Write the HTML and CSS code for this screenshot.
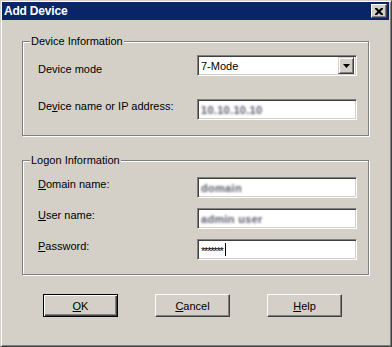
FILE: index.html
```html
<!DOCTYPE html>
<html lang="en">
  <head>
    <meta charset="UTF-8" />
    <title>Add Device</title>
    <link rel="stylesheet" href="styles.css">
  </head>
  <body>
    <div class="window">
      <div class="titlebar">
        <span class="title">Add Device</span>
        <span class="close-btn">
          <svg width="8" height="7" viewBox="0 0 8 7">
            <path d="M0 0h2l2 2 2-2h2v1l-2.5 2.5L8 6v1H6L4 5 2 7H0V6l2.5-2.5L0 1z" fill="#000" />
          </svg>
        </span>
      </div>

      <div class="content">
        <!-- Device Information -->
        <fieldset class="group group-device">
          <legend>Device Information</legend>
          <div class="row">
            <label class="label label-low">Device mode</label>
            <div class="field combo">
              <span class="combo-text">7-Mode</span>
              <span class="combo-btn">
                <svg width="7" height="4" viewBox="0 0 7 4"><path d="M0 0h7L3.5 4z" fill="#000" /></svg>
              </span>
            </div>
          </div>
          <div class="row row-spaced">
            <label class="label">De<u>v</u>ice name or IP address:</label>
            <div class="field"><span class="blurred">10.10.10.10</span></div>
          </div>
        </fieldset>

        <!-- Logon Information -->
        <fieldset class="group group-logon">
          <legend>Logon Information</legend>
          <div class="row">
            <label class="label"><u>D</u>omain name:</label>
            <div class="field"><span class="blurred">domain</span></div>
          </div>
          <div class="row row-tight">
            <label class="label"><u>U</u>ser name:</label>
            <div class="field"><span class="blurred">admin user</span></div>
          </div>
          <div class="row row-tight">
            <label class="label"><u>P</u>assword:</label>
            <div class="field"><span class="password">*******</span><span class="caret"></span></div>
          </div>
        </fieldset>

        <div class="buttons">
          <button class="btn btn-default"><u>O</u>K</button>
          <button class="btn"><u>C</u>ancel</button>
          <button class="btn"><u>H</u>elp</button>
        </div>
      </div>
    </div>
  </body>
</html>
```

FILE: styles.css
```css
/* Global Styles */
body {
  margin: 0;
  font-family: "Liberation Sans", Arial, sans-serif;
  font-size: 11px;
  color: #000;
  background: #d4d0c8;
}

/* Window frame */
.window {
  width: 392px;
  height: 347px;
  box-sizing: border-box;
  background: #d4d0c8;
  border: 1px solid;
  border-color: #d4d0c8 #404040 #404040 #d4d0c8;
  box-shadow: inset 1px 1px #fff, inset -1px -1px #808080;
  padding: 1px 2px 0 1px;
}

.titlebar {
  height: 18px;
  background: #0a246a;
  display: flex;
  align-items: center;
  justify-content: space-between;
  padding: 0 2px 0 2px;
}

.title {
  color: #fff;
  font-weight: bold;
  font-size: 12px;
  letter-spacing: -0.2px;
}

.close-btn {
  width: 16px;
  height: 14px;
  box-sizing: border-box;
  background: #d4d0c8;
  border: 1px solid;
  border-color: #fff #404040 #404040 #fff;
  box-shadow: inset -1px -1px #808080;
  display: flex;
  align-items: center;
  justify-content: center;
  padding-right: 1px;
}

/* Content */
.content {
  padding: 15px 0 0 20px;
}

/* Group boxes */
.group {
  width: 347px;
  box-sizing: border-box;
  margin: 0;
  border: 1px solid #808080;
  box-shadow: inset 1px 1px #fff, 1px 1px #fff;
  padding: 7px 11px 15px 7px;
  min-width: 0;
}

.group legend {
  padding: 0 1px;
  line-height: 13px;
  background: #d4d0c8;
  position: relative;
}

.group-logon {
  margin-top: 18px;
  padding-top: 10px;
  padding-bottom: 14px;
}

.row {
  display: flex;
  align-items: flex-start;
  padding-left: 8px;
}

.row-spaced {
  margin-top: 23px;
}

.row-tight {
  margin-top: 10px;
}

.label {
  width: 159px;
  line-height: 13px;
  padding-top: 1px;
}

.label-low {
  padding-top: 8px;
}

/* Sunken fields */
.field {
  width: 160px;
  height: 21px;
  box-sizing: border-box;
  background: #fff;
  border: 1px solid;
  border-color: #808080 #fff #fff #808080;
  box-shadow: inset 1px 1px #404040, inset -1px -1px #d4d0c8;
  padding: 0 3px;
  display: flex;
  align-items: center;
  overflow: hidden;
}

.blurred {
  color: #5c5c6c;
  font-weight: bold;
  filter: blur(1.3px);
  letter-spacing: 0.3px;
}

.password {
  font-size: 11px;
  letter-spacing: -1.2px;
  line-height: 11px;
  padding-top: 4px;
}

.caret {
  width: 1px;
  height: 13px;
  background: #000;
  margin-left: 2px;
}

/* Combo box */
.combo {
  padding: 0 0 0 3px;
  justify-content: space-between;
}

.combo-btn {
  width: 16px;
  height: 17px;
  box-sizing: border-box;
  margin-right: 2px;
  background: #d4d0c8;
  border: 1px solid;
  border-color: #d4d0c8 #404040 #404040 #d4d0c8;
  box-shadow: inset 1px 1px #fff, inset -1px -1px #808080;
  display: flex;
  align-items: center;
  justify-content: center;
}

/* Buttons */
.buttons {
  display: flex;
  gap: 37px;
  margin-top: 19px;
  padding-left: 21px;
}

.btn {
  width: 75px;
  height: 23px;
  box-sizing: border-box;
  background: #d4d0c8;
  font-family: inherit;
  font-size: 11px;
  color: #000;
  border: 1px solid;
  border-color: #fff #404040 #404040 #fff;
  box-shadow: inset -1px -1px #808080;
  padding: 0;
}

.btn-default {
  border-color: #000;
  box-shadow: inset 1px 1px #fff, inset -1px -1px #404040, inset -2px -2px #808080;
}
```
